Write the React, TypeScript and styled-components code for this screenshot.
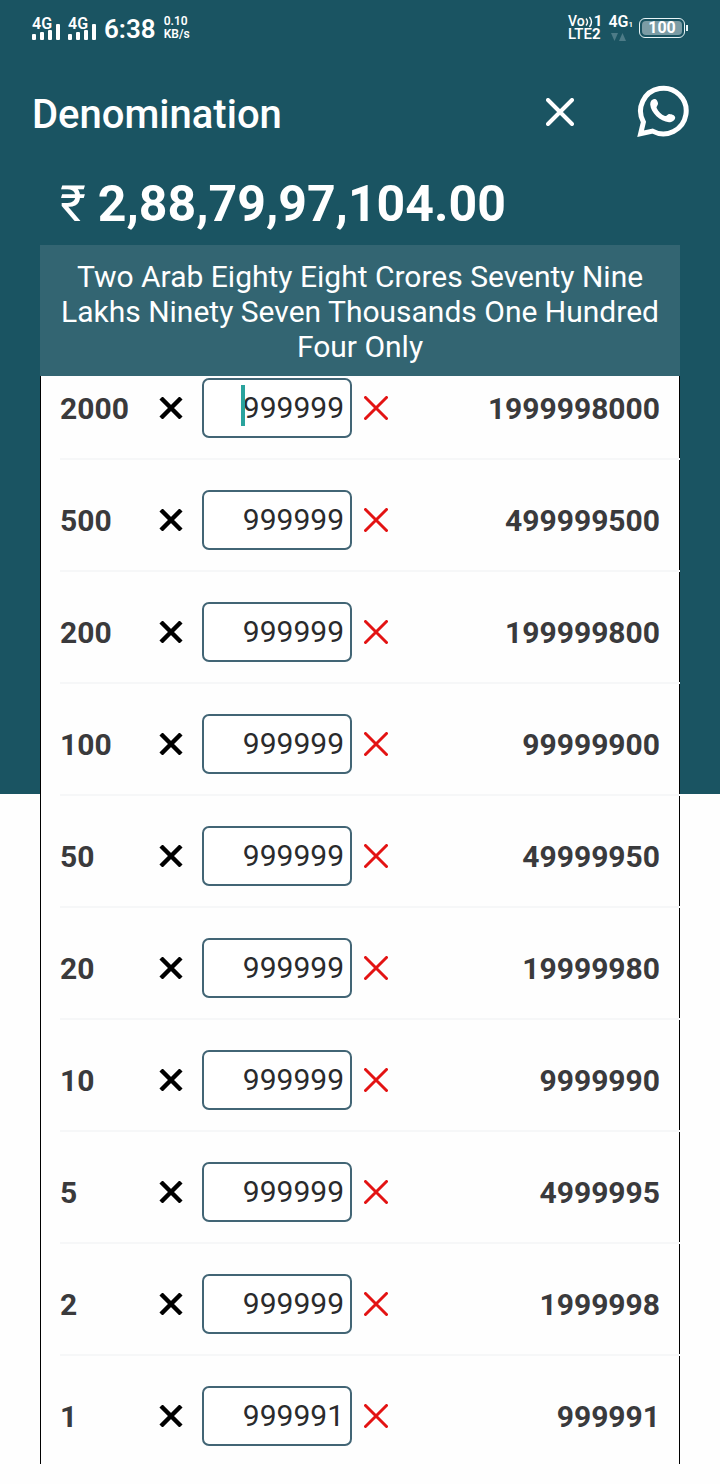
import React, { useState } from "react";
import styled, { createGlobalStyle } from "styled-components";

const GlobalStyle = createGlobalStyle`
  *, *::before, *::after { box-sizing: border-box; }
  html { background: #fefefe; }
  body {
    margin: 0;
    font-family: Roboto, "Noto Sans", sans-serif;
    color: #ffffff;
  }
`;

const Page = styled.div`
  background: linear-gradient(#1a5462, #1a5462) top / 100% 794px no-repeat;
  padding-bottom: 20px;
`;

const StatusBar = styled.div`
  display: flex;
  justify-content: space-between;
  align-items: center;
  height: 56px;
  padding: 0 32px;
`;

const StatusGroup = styled.div<{ $gap: number }>`
  display: flex;
  align-items: center;
  gap: ${(p) => p.$gap}px;
`;

const Signal = styled.div`
  display: flex;
  flex-direction: column;
  width: 28px;
  font-size: 16px;
  line-height: 16px;
  font-weight: 600;
`;

const SignalBars = styled.svg`
  display: block;
  margin-top: -8px;
`;

const Clock = styled.time`
  margin-top: 2px;
  font-size: 26px;
  line-height: 32px;
  font-weight: 600;
`;

const Stack = styled.div<{ $size: number; $weight: number }>`
  display: flex;
  flex-direction: column;
  font-size: ${(p) => p.$size}px;
  line-height: 13px;
  font-weight: ${(p) => p.$weight};
`;

const SplitLine = styled.div`
  display: flex;
  justify-content: space-between;
`;

const Volte = styled.span`
  font-size: 14px;
`;

const NetArrows = styled.svg`
  display: block;
  margin: 2px 0 0 3px;
`;

const Tiny = styled.small`
  font-size: 8px;
`;

const Battery = styled.div`
  position: relative;
  width: 46px;
  height: 20px;
  border: 1px solid #e8f4f6;
  border-radius: 6px;
  padding: 2px;
  margin-right: 3px;

  &::after {
    content: "";
    position: absolute;
    right: -4px;
    top: 6px;
    width: 2px;
    height: 6px;
    background: #e8f4f6;
  }
`;

const BatteryLevel = styled.div`
  height: 14px;
  border-radius: 4px;
  background: #7b9ca5;
  font-size: 16px;
  line-height: 14px;
  font-weight: 700;
  text-align: center;
`;

const AppBar = styled.header`
  display: flex;
  align-items: center;
  height: 112px;
  padding: 0 31px 0 32px;
`;

const Title = styled.h1`
  flex: 1;
  margin: 6px 0 0;
  font-size: 40px;
  line-height: 48px;
  font-weight: 500;
`;

const IconButton = styled.button`
  display: flex;
  padding: 0;
  border: 0;
  background: none;
  color: inherit;
`;

const Actions = styled.div`
  display: flex;
  align-items: center;
  gap: 63px;
`;

const Total = styled.div`
  display: flex;
  align-items: center;
  gap: 12px;
  height: 77px;
  padding: 0 60px 6px;
  font-size: 50px;
  line-height: 60px;
  font-weight: 700;
`;

const Rupee = styled.span`
  font-weight: 400;
`;

const Panel = styled.main`
  margin: 0 40px;
`;

const Words = styled.p`
  margin: 0;
  padding: 14px 20px 12px;
  background: #336572;
  font-size: 30px;
  line-height: 35px;
  text-align: center;
`;

const List = styled.div`
  background: #fefefe;
  border: solid #000000;
  border-width: 0 1px;
`;

const Row = styled.div`
  display: grid;
  grid-template-columns: 99px 43px 150px 50px 1fr;
  align-items: center;
  height: 112px;
  margin: 0 -1px 0 19px;
  padding: 30px 20px 20px 0;
  border-bottom: 2px solid #f6f7f8;
  font-size: 30px;
  line-height: 36px;
  color: #3a3a3c;

  &:first-child {
    height: 84px;
    padding-top: 2px;
  }

  &:last-child {
    height: 108px;
    padding-bottom: 18px;
    border-bottom: 0;
    margin-right: 0;
    padding-right: 19px;
  }
`;

const Value = styled.label`
  padding-top: 2px;
  font-weight: 700;
`;

const Amount = styled.output`
  padding-top: 2px;
  font-weight: 700;
  text-align: right;
`;

const Field = styled.div`
  position: relative;
`;

const CountInput = styled.input`
  display: block;
  width: 100%;
  height: 60px;
  padding: 0 6px 2px 10px;
  border: 2px solid #426575;
  border-radius: 7px;
  outline: 0;
  background: #ffffff;
  color: #2a2a2c;
  font: 400 30px/36px Roboto, sans-serif;
  text-align: right;
`;

const Caret = styled.span`
  position: absolute;
  left: 39px;
  top: 7px;
  width: 4px;
  height: 41px;
  background: #2aa39d;
`;

const ClearButton = styled(IconButton)`
  padding-left: 12px;
  color: #e31313;
`;

function Cross({ size, stroke }: { size: number; stroke: number }) {
  const a = stroke / 2;
  const b = size - a;
  return (
    <svg width={size} height={size} fill="none" stroke="currentColor" strokeWidth={stroke} strokeLinecap="round" aria-hidden="true">
      <path d={`M${a} ${a}L${b} ${b}M${b} ${a}L${a} ${b}`} />
    </svg>
  );
}

function Times() {
  return (
    <svg width="24" height="22" fill="none" stroke="#000" strokeWidth="4.4" aria-hidden="true">
      <path d="M2 1L22 21M22 1L2 21" />
    </svg>
  );
}

function SignalIndicator() {
  return (
    <Signal>
      4G
      <SignalBars width="28" height="16" fill="#fff" aria-hidden="true">
        <rect x="0" y="10" width="4" height="6" rx="1" />
        <rect x="8" y="8" width="4" height="8" rx="1" />
        <rect x="16" y="6" width="4" height="10" rx="1" />
        <rect x="24" y="0" width="4" height="16" rx="1" />
      </SignalBars>
    </Signal>
  );
}

function VolteWaves() {
  return (
    <svg width="9" height="13" fill="none" stroke="#fff" strokeWidth="1.4" aria-hidden="true">
      <path d="M1 3.500Q4 7 1 10.500M4.500 2Q8.500 7 4.500 12" />
    </svg>
  );
}

function WhatsApp() {
  return (
    <svg width="52" height="54" viewBox="0 0 52 54" aria-hidden="true">
      <path
        d="M3.600 48.800L6.400 37A22.800 22.800 0 1 1 15.600 46.100Z"
        fill="none"
        stroke="#fff"
        strokeWidth="5"
      />
      <path
        d="M17 14C19.500 13.600 20.300 15.500 21 18C21.500 19.900 19.300 21.300 19.500 22.700C21.300 26.600 24.200 29.400 28 31C29.900 31.400 30.600 29 32.400 29C35 29.200 38.200 30.600 38.200 32.400C38.200 35.400 34.800 37.200 32 37.200C23 36.400 14 27.900 13.200 19.500C13.200 16.500 14.500 14.500 17 14Z"
        fill="#fff"
      />
    </svg>
  );
}

const initial: [number, string][] = [
  [2000, "999999"],
  [500, "999999"],
  [200, "999999"],
  [100, "999999"],
  [50, "999999"],
  [20, "999999"],
  [10, "999999"],
  [5, "999999"],
  [2, "999999"],
  [1, "999991"],
];

export default function App() {
  const [counts, setCounts] = useState(initial.map(([, count]) => count));
  const update = (index: number, value: string) =>
    setCounts((list) => list.map((c, i) => (i === index ? value : c)));

  return (
    <Page>
      <GlobalStyle />
      <StatusBar>
        <StatusGroup $gap={8}>
          <SignalIndicator />
          <SignalIndicator />
          <Clock>6:38</Clock>
          <Stack $size={12} $weight={600}>
            <span>0.10</span>
            <span>KB/s</span>
          </Stack>
        </StatusGroup>
        <StatusGroup $gap={6}>
          <Stack $size={15} $weight={500}>
            <SplitLine>
              <Volte>Vo</Volte>
              <VolteWaves />
              <b>1</b>
            </SplitLine>
            <span>LTE<b>2</b></span>
          </Stack>
          <Stack $size={16} $weight={600}>
            <span>4G<Tiny>1</Tiny></span>
            <NetArrows width="16" height="8" fill="#4d7b87" aria-hidden="true">
              <path d="M0 0H7L3.500 8ZM8 8H15L11.500 0Z" />
            </NetArrows>
          </Stack>
          <Battery>
            <BatteryLevel>100</BatteryLevel>
          </Battery>
        </StatusGroup>
      </StatusBar>
      <AppBar>
        <Title>Denomination</Title>
        <Actions>
          <IconButton type="button" aria-label="Close">
            <Cross size={28} stroke={4} />
          </IconButton>
          <IconButton type="button" aria-label="Share on WhatsApp">
            <WhatsApp />
          </IconButton>
        </Actions>
      </AppBar>
      <Total>
        <Rupee>₹</Rupee>
        <span>2,88,79,97,104.00</span>
      </Total>
      <Panel>
        <Words>
          Two Arab Eighty Eight Crores Seventy Nine Lakhs Ninety Seven Thousands One Hundred Four Only
        </Words>
        <List>
          {initial.map(([value], i) => (
            <Row key={value}>
              <Value htmlFor={`count-${value}`}>{value}</Value>
              <Times />
              <Field>
                <CountInput
                  id={`count-${value}`}
                  inputMode="numeric"
                  value={counts[i]}
                  onChange={(e) => update(i, e.target.value)}
                />
                {i === 0 && <Caret />}
              </Field>
              <ClearButton type="button" aria-label={`Clear ${value}`} onClick={() => update(i, "")}>
                <Cross size={24} stroke={3} />
              </ClearButton>
              <Amount htmlFor={`count-${value}`}>{value * Number(counts[i])}</Amount>
            </Row>
          ))}
        </List>
      </Panel>
    </Page>
  );
}
